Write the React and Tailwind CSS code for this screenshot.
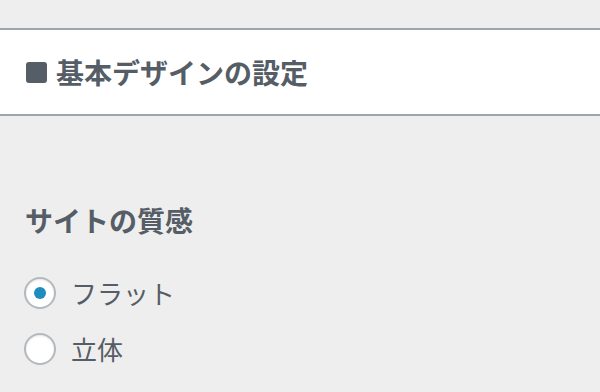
import { useState } from "react";

const options = [
  { id: "flat", label: "フラット" },
  { id: "3d", label: "立体" },
];

export default function App() {
  const [texture, setTexture] = useState("flat");

  return (
    <div
      className="w-full h-[392px] bg-[#eeeeee] pt-[28px] text-[#555d66] overflow-hidden"
      style={{ fontFamily: '"Noto Sans CJK JP", "Noto Sans", sans-serif' }}
    >
      {/* Section header */}
      <div className="h-[88px] bg-white border-y-2 border-[#a0a5aa] flex items-center pl-[26px]">
        <span className="w-[21px] h-[21px] rounded-[3px] bg-[#555d66] mr-[9px]" />
        <h2 className="text-[28px] font-bold leading-none">基本デザインの設定</h2>
      </div>

      {/* Texture setting */}
      <div className="px-[24px] pt-[83px]">
        <h3 className="text-[28px] font-bold leading-[42px] pl-px">サイトの質感</h3>
        <div className="mt-[36px] flex flex-col gap-[24px]">
          {options.map((opt) => (
            <label key={opt.id} className="flex items-center h-[32px] cursor-pointer">
              <input
                type="radio"
                name="texture"
                className="sr-only"
                checked={texture === opt.id}
                onChange={() => setTexture(opt.id)}
              />
              <span className="w-[32px] h-[32px] rounded-full border-2 border-[#b4b9be] bg-white shadow-[inset_0_1px_2px_rgba(0,0,0,0.1)] flex items-center justify-center">
                {texture === opt.id && (
                  <span className="w-[12px] h-[12px] rounded-full bg-[#1e8cbe]" />
                )}
              </span>
              <span className="ml-[15px] text-[26px] leading-none">{opt.label}</span>
            </label>
          ))}
        </div>
      </div>
    </div>
  );
}
